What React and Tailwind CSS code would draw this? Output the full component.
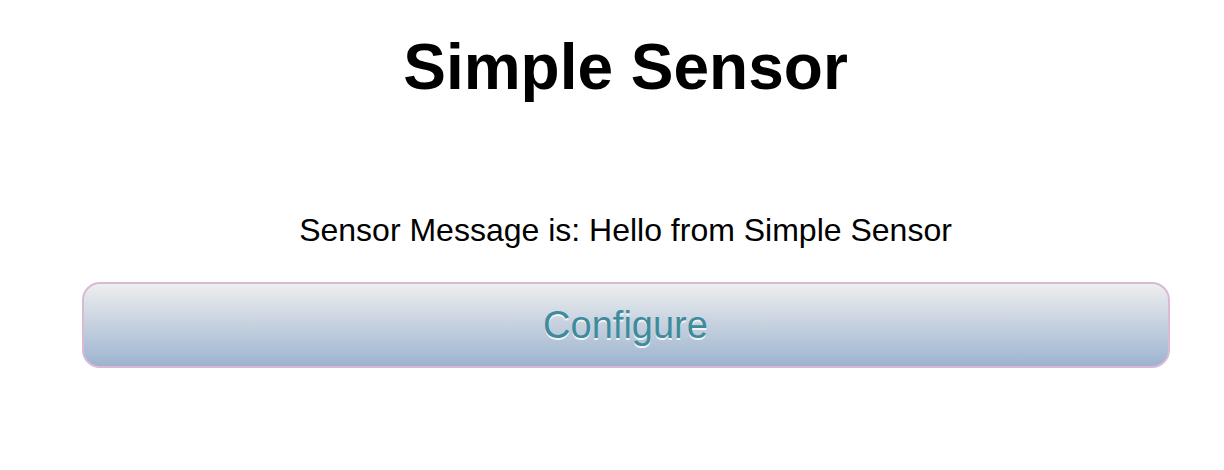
import React from "react";

export default function App() {
  return (
    <div className="w-[1224px] h-[470px] bg-white pl-[27px] flex flex-col items-center font-['Liberation_Sans',Arial,sans-serif] text-black">
      <h1 className="mt-[27px] text-[64px] leading-[80px] font-bold">Simple Sensor</h1>
      <p className="mt-[103px] text-[32px] leading-[40px]">Sensor Message is: Hello from Simple Sensor</p>
      <button
        type="button"
        className="mt-[32px] w-[1088px] h-[86px] rounded-[18px] border-2 border-[#d9b9d6] bg-gradient-to-b from-[#eeeeee] to-[#9db4cf] text-[#3d8b9c] text-[38px] [text-shadow:0_2px_0_#f2f2f2]"
      >
        Configure
      </button>
    </div>
  );
}
